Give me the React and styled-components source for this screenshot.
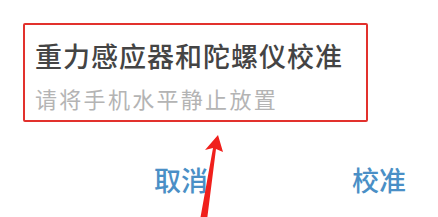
import React from 'react'
import styled, { createGlobalStyle } from 'styled-components'

const Global = createGlobalStyle`
  html, body {
    margin: 0;
    padding: 0;
    background: #ffffff;
  }
  body {
    font-family: "Noto Sans CJK SC", "Noto Sans", sans-serif;
  }
`

const Page = styled.div`
  position: relative;
  width: 438px;
  height: 217px;
  overflow: hidden;
  padding: 23px 0 0 23px;
  box-sizing: border-box;
`

const Highlight = styled.div`
  width: 345px;
  height: 99px;
  box-sizing: border-box;
  border: 2px solid #e2312d;
  border-radius: 2px;
  padding: 13px 0 0 10px;
  display: flex;
  flex-direction: column;
  gap: 10px;
`

const Title = styled.div`
  font-size: 27px;
  line-height: 36px;
  font-weight: 500;
  letter-spacing: 1px;
  color: #444444;
`

const Subtitle = styled.div`
  font-size: 22px;
  line-height: 28px;
  letter-spacing: 2.3px;
  color: #b4b4b4;
`

const Actions = styled.div`
  display: flex;
  margin-top: 40px;
  padding-left: 131px;
  gap: 144px;
`

const Action = styled.button`
  border: none;
  background: none;
  padding: 0;
  font-family: inherit;
  font-size: 27px;
  line-height: 36px;
  font-weight: 500;
  color: #4a8fc6;
`

const Arrow = styled.svg`
  position: absolute;
  left: 190px;
  top: 130px;
`

export default function App() {
  return (
    <>
      <Global />
      <Page>
        <Highlight>
          <Title>重力感应器和陀螺仪校准</Title>
          <Subtitle>请将手机水平静止放置</Subtitle>
        </Highlight>
        <Actions>
          <Action>取消</Action>
          <Action>校准</Action>
        </Actions>
        <Arrow width="50" height="90" viewBox="0 0 50 90">
          <path d="M28 5 L15 20 L23 18 L10 90 L17 90 L26 19 L33 22 Z" fill="#f0201c" />
        </Arrow>
      </Page>
    </>
  )
}
